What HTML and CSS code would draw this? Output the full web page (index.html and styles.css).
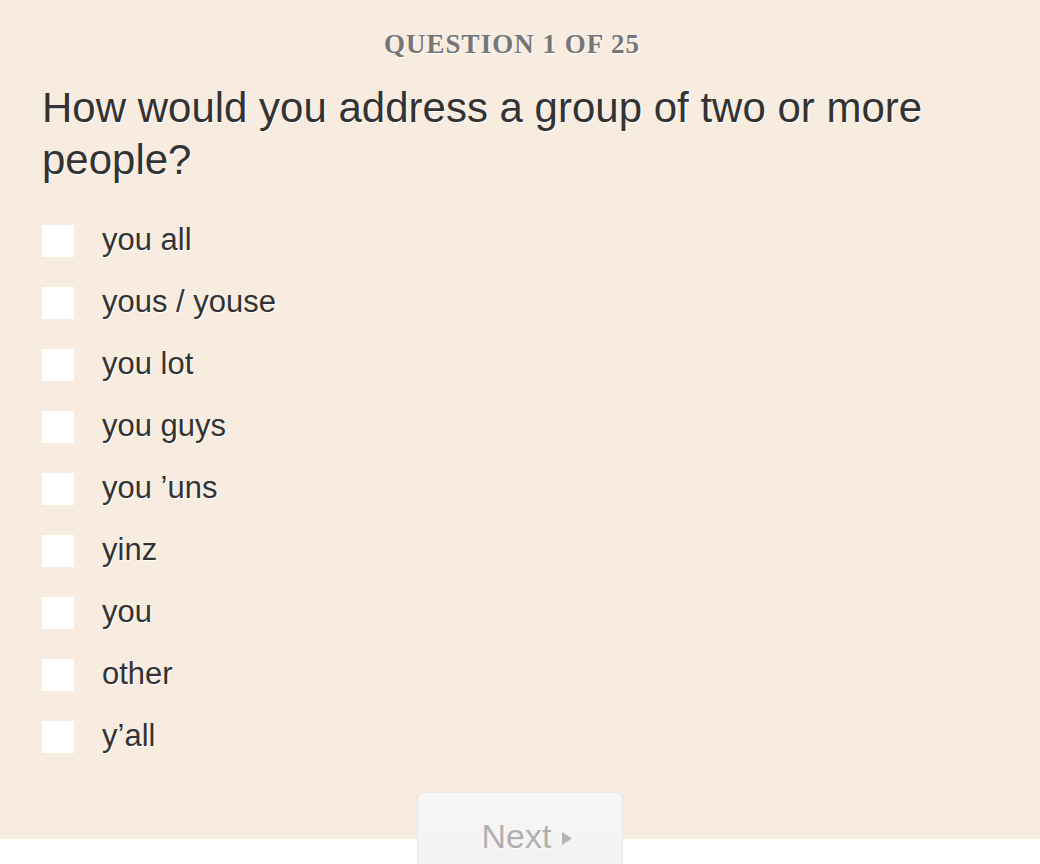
FILE: index.html
```html
<!DOCTYPE html>
<html>
<head>
<meta charset="utf-8">
<link rel="stylesheet" href="styles.css">
</head>
<body>
<section class="quiz">
  <div class="counter">QUESTION 1 OF 25</div>
  <h1 class="question">How would you address a group of two or more people?</h1>
  <ul class="options">
    <li class="option"><span class="box"></span><span class="label">you all</span></li>
    <li class="option"><span class="box"></span><span class="label">yous / youse</span></li>
    <li class="option"><span class="box"></span><span class="label">you lot</span></li>
    <li class="option"><span class="box"></span><span class="label">you guys</span></li>
    <li class="option"><span class="box"></span><span class="label">you ’uns</span></li>
    <li class="option"><span class="box"></span><span class="label">yinz</span></li>
    <li class="option"><span class="box"></span><span class="label">you</span></li>
    <li class="option"><span class="box"></span><span class="label">other</span></li>
    <li class="option"><span class="box"></span><span class="label">y’all</span></li>
  </ul>
  <div class="actions">
    <button class="next">Next<svg class="arrow" width="10" height="13" viewBox="0 0 10 13"><path d="M0 0 L10 6.5 L0 13 Z" fill="#b6b6b6"/></svg></button>
  </div>
</section>
</body>
</html>
```
FILE: styles.css
```css
html, body {
  margin: 0;
  padding: 0;
  background: #ffffff;
}
body {
  font-family: "Liberation Sans", Arial, sans-serif;
  overflow: hidden;
  height: 864px;
}
.quiz {
  background: #f8ece0;
  padding: 28px 42px 0;
  height: 811px;
}
.counter {
  font-family: "Liberation Serif", "Times New Roman", serif;
  font-weight: bold;
  font-size: 27px;
  line-height: 32px;
  letter-spacing: 1px;
  color: #767676;
  text-align: center;
  padding-right: 16px;
  text-shadow: 1px 1px 0 #ffffff;
}
.question {
  margin: 22px 0 0;
  font-weight: normal;
  font-size: 42px;
  line-height: 52px;
  color: #333333;
  text-shadow: 1px 1px 0 #ffffff;
}
.options {
  list-style: none;
  margin: 39px 0 0;
  padding: 0;
  display: flex;
  flex-direction: column;
  gap: 30px;
}
.option {
  display: flex;
  align-items: center;
  gap: 28px;
  height: 32px;
}
.box {
  width: 32px;
  height: 32px;
  background: #ffffff;
  flex: none;
}
.label {
  font-size: 31px;
  color: #333333;
  text-shadow: 1px 1px 0 #ffffff;
  position: relative;
  top: -1px;
}
.actions {
  display: flex;
  justify-content: center;
  margin-top: 39px;
}
.next {
  width: 206px;
  height: 90px;
  border: 1px solid #e8e8e8;
  border-radius: 7px 7px 0 0;
  background: linear-gradient(#f7f7f7, #f1f1f1);
  font-family: "Liberation Sans", Arial, sans-serif;
  font-size: 34px;
  line-height: 39px;
  color: #b0b0b0;
  text-shadow: 1px 1px 0 #ffffff;
  display: flex;
  justify-content: center;
  align-items: flex-start;
  gap: 11px;
  padding: 24px 0 0 14px;
}
.arrow {
  margin-top: 15px;
  flex: none;
}
```
